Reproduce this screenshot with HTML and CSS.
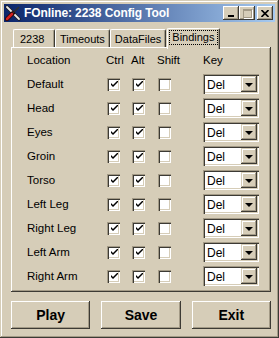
FILE: index.html
```html
<!DOCTYPE html>
<html lang="en">
<head>
  <meta charset="UTF-8">
  <title>FOnline: 2238 Config Tool</title>
  <link rel="stylesheet" href="styles.css">
</head>
<body>
  <div class="window">
    <div class="titlebar">
      <svg class="app-icon" width="16" height="16" viewBox="0 0 16 16">
        <path d="M2 2 L14 14" stroke="#202020" stroke-width="3.4" stroke-linecap="round"/>
        <path d="M2 2 L14 14" stroke="#e8e8e8" stroke-width="1.8" stroke-linecap="round"/>
        <path d="M2 14 L8 8" stroke="#200000" stroke-width="4" stroke-linecap="round"/>
        <path d="M2 14 L7 9" stroke="#d02020" stroke-width="2.6" stroke-linecap="round"/>
        <path d="M8 8 L14 2" stroke="#303030" stroke-width="1.6"/>
      </svg>
      <span class="title">FOnline: 2238 Config Tool</span>
      <div class="caption-buttons">
        <div class="cap-btn"><span class="glyph-min"></span></div>
        <div class="cap-btn disabled"><span class="glyph-max"></span></div>
        <div class="cap-btn close">
          <svg width="8" height="7" viewBox="0 0 8 7"><path d="M0.5 0 L7.5 7 M7.5 0 L0.5 7" stroke="#000" stroke-width="1.6"/></svg>
        </div>
      </div>
    </div>

    <div class="client">
      <div class="tabs">
        <div class="tab">2238</div>
        <div class="tab">Timeouts</div>
        <div class="tab">DataFiles</div>
        <div class="tab active"><span class="focus">Bindings</span></div>
      </div>

      <div class="panel">
        <div class="bindings" id="bindings">
          <div class="head">Location</div>
          <div class="head">Ctrl</div>
          <div class="head">Alt</div>
          <div class="head">Shift</div>
          <div class="head">Key</div>
        </div>
      </div>

      <div class="actions">
        <button class="btn">Play</button>
        <button class="btn">Save</button>
        <button class="btn">Exit</button>
      </div>
    </div>
  </div>

  <script>
    const locations = ['Default', 'Head', 'Eyes', 'Groin', 'Torso', 'Left Leg', 'Right Leg', 'Left Arm', 'Right Arm'];
    const grid = document.getElementById('bindings');
    const check = '<svg width="7" height="7" viewBox="0 0 7 7"><path d="M0 2 L0 4 L2 6 L7 1 L7 -1 L2 4 Z" fill="#000"/></svg>';

    locations.forEach(name => {
      grid.insertAdjacentHTML('beforeend', `
        <div class="loc">${name}</div>
        <div class="cell"><span class="checkbox">${check}</span></div>
        <div class="cell"><span class="checkbox">${check}</span></div>
        <div class="cell"><span class="checkbox"></span></div>
        <div class="cell">
          <div class="combo">
            <span class="combo-text">Del</span>
            <span class="combo-btn"><span class="arrow"></span></span>
          </div>
        </div>
      `);
    });
  </script>
</body>
</html>
```

FILE: styles.css
```css
:root {
  --face: #d6cdb8;
  --light: #ffffff;
  --shadow: #a39a86;
  --dark: #3c3a34;
  --text: #000000;
}

html, body {
  margin: 0;
  padding: 0;
}

body {
  font-family: 'Liberation Sans', Arial, sans-serif;
  font-size: 11px;
  color: var(--text);
  background: var(--face);
}

.window {
  width: 279px;
  height: 338px;
  box-sizing: border-box;
  padding: 4px;
  background: var(--face);
  box-shadow: inset -1px -1px var(--dark), inset 1px 1px var(--face),
              inset -2px -2px var(--shadow), inset 2px 2px var(--light);
  display: flex;
  flex-direction: column;
}

/* title bar */
.titlebar {
  height: 18px;
  display: flex;
  align-items: center;
  background: linear-gradient(90deg, #0a246a, #a6caf0);
  padding: 0 2px 0 1px;
}

.app-icon {
  flex: none;
  margin-right: 3px;
}

.title {
  color: #fff;
  font-weight: bold;
  font-size: 12px;
  letter-spacing: -0.1px;
  flex: 1;
  white-space: nowrap;
}

.caption-buttons {
  display: flex;
  align-items: center;
}

.cap-btn {
  width: 16px;
  height: 14px;
  box-sizing: border-box;
  background: var(--face);
  box-shadow: inset -1px -1px var(--dark), inset 1px 1px var(--light),
              inset -2px -2px var(--shadow);
  display: flex;
  align-items: center;
  justify-content: center;
}

.cap-btn.close {
  margin-left: 2px;
}

.glyph-min {
  width: 6px;
  height: 2px;
  background: #000;
  margin-top: 6px;
  margin-right: 1px;
}

.glyph-max {
  width: 7px;
  height: 6px;
  border: 1px solid var(--shadow);
  border-top-width: 2px;
  box-shadow: 1px 1px var(--light);
}

/* client area */
.client {
  flex: 1;
  display: flex;
  flex-direction: column;
  padding: 4px 4px 0 7px;
}

.tabs {
  display: flex;
  align-items: flex-end;
  height: 21px;
  padding-left: 2px;
  position: relative;
  z-index: 1;
}

.tab {
  height: 18px;
  box-sizing: border-box;
  padding: 3px 4px 0 4px;
  font-size: 11px;
  border-top: 1px solid var(--light);
  border-left: 1px solid var(--light);
  border-right: 1px solid var(--dark);
  border-radius: 2px 2px 0 0;
  box-shadow: inset -1px 0 var(--shadow);
}

.tab:first-child {
  width: 42px;
  padding-left: 6px;
}

.tab.active {
  height: 21px;
  padding: 2px 2px 0 2px;
  margin-left: 1px;
  margin-bottom: -2px;
  background: var(--face);
}

.focus {
  display: inline-block;
  padding: 0 2px 1px 2px;
  outline: 1px dotted #000;
}

.panel {
  height: 245px;
  box-sizing: border-box;
  width: 260px;
  padding: 1px 0 0 16px;
  box-shadow: inset -1px -1px var(--dark), inset 1px 1px var(--light),
              inset -2px -2px var(--shadow);
}

.bindings {
  display: grid;
  grid-template-columns: 79px 25px 26px 46px 56px;
  grid-auto-rows: 24px;
  align-items: center;
}

.head,
.loc {
  font-size: 11.5px;
}

.cell {
  display: flex;
  align-items: center;
}

.checkbox {
  width: 13px;
  height: 13px;
  box-sizing: border-box;
  margin-left: 1px;
  background: #fff;
  box-shadow: inset 1px 1px var(--shadow), inset 2px 2px var(--dark),
              inset -1px -1px var(--light), inset -2px -2px var(--face);
  display: flex;
  align-items: center;
  justify-content: center;
}

.checkbox svg {
  margin-left: 1px;
  margin-top: 1px;
}

.combo {
  width: 56px;
  height: 20px;
  box-sizing: border-box;
  background: #fff;
  padding: 2px;
  display: flex;
  box-shadow: inset 1px 1px var(--shadow), inset 2px 2px var(--dark),
              inset -1px -1px var(--light), inset -2px -2px var(--face);
}

.combo-text {
  flex: 1;
  font-size: 12px;
  padding: 2px 0 0 2px;
}

.combo-btn {
  width: 16px;
  background: var(--face);
  box-shadow: inset -1px -1px var(--dark), inset 1px 1px var(--face),
              inset -2px -2px var(--shadow), inset 2px 2px var(--light);
  display: flex;
  align-items: center;
  justify-content: center;
}

.arrow {
  width: 0;
  height: 0;
  border-left: 4px solid transparent;
  border-right: 4px solid transparent;
  border-top: 4px solid #000;
  margin-top: 1px;
}

/* bottom buttons */
.actions {
  display: flex;
  gap: 11px;
  margin-top: 9px;
}

.btn {
  width: 80px;
  height: 28px;
  border: none;
  background: var(--face);
  font-family: 'Liberation Sans', Arial, sans-serif;
  font-weight: bold;
  font-size: 14px;
  color: #000;
  padding: 0;
  box-shadow: inset -1px -1px var(--dark), inset 1px 1px var(--light),
              inset -2px -2px var(--shadow);
}
```
